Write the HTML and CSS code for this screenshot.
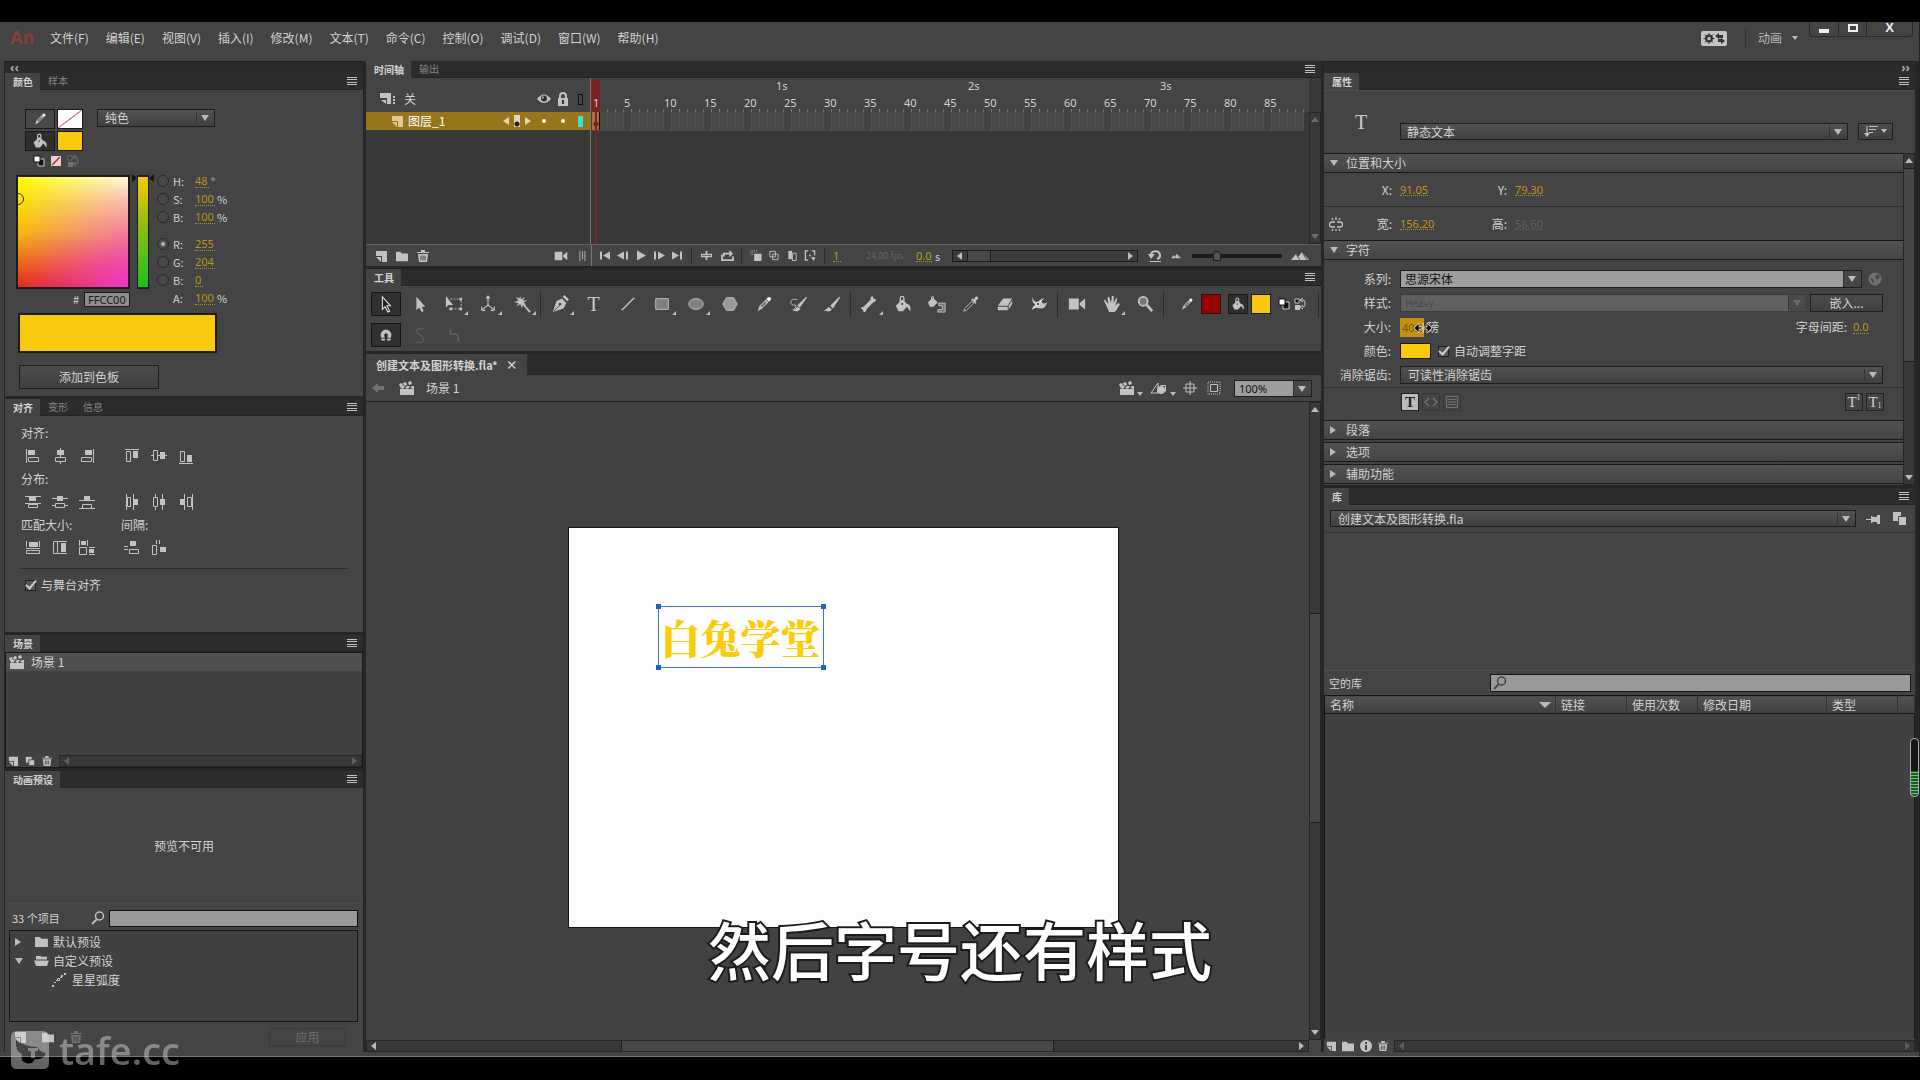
FILE: index.html
```html
<!DOCTYPE html>
<html lang="zh-CN">
<head>
<meta charset="utf-8">
<meta name="viewport" content="width=device-width, initial-scale=1">
<title>创建文本及图形转换.fla</title>
<link rel="stylesheet" href="styles.css">
</head>
<body>
<svg class="sprite" aria-hidden="true">
  <symbol id="menu" viewBox="0 0 12 10"><path d="M1 1h10v1H1zM1 3h10v1H1zM1 6h10v1H1zM1 8h10v1H1z"/></symbol>
  <symbol id="pencil" viewBox="0 0 20 20"><path d="M3 18l2-6 7-7 3 3-7 7z"/><path d="M12.500 4.500l2-2a2.200 2.200 0 0 1 3 3l-2 2z" fill="#f4f4f4"/><path d="M6 12l2 2 5-5-2-2z" fill="#777"/></symbol>
  <symbol id="bucket" viewBox="0 0 20 20"><path d="M2 12l7-7 7 6-6 7H5z"/><path d="M15 10c3 1 4 4 3 8-2-2-2-4-4-5z"/><path d="M7 10V3.500a2 2 0 0 1 4 0V9" fill="none" stroke="currentColor" stroke-width="1.500"/><circle cx="9" cy="10" r="1" fill="#333"/></symbol>
  <symbol id="swapbw" viewBox="0 0 12 12"><path d="M5 4h6v7H5z" fill="#111" stroke="#ccc"/><path d="M1 1h6v6H1z" fill="#fff" stroke="#111"/></symbol>
  <symbol id="nocolor" viewBox="0 0 12 12"><path d="M1 1h10v10H1z" fill="#eccfd2"/><path d="M2 10l8-8" stroke="#b02828" stroke-width="1.500"/></symbol>
  <symbol id="swap" viewBox="0 0 12 12"><path d="M1 1h4v4H1z" fill="#111" stroke="currentColor"/><path d="M1 7h5v5H1z"/><path d="M7 2h2q2 0 2 3v2q0 2-3 2M9 0L6 2l3 2M9 7L6 9l3 2" fill="none" stroke="currentColor"/></symbol>
  <symbol id="al" viewBox="0 0 16 16"><path d="M1 1h1v14H1zM3 2h7v5H3z"/><path d="M3.500 9.500h10v4h-10z" fill="none" stroke="currentColor"/></symbol>
  <symbol id="ac" viewBox="0 0 16 16"><path d="M8 0h1v16H8zM5 2h7v5H5z"/><path d="M3.500 9.500h10v4h-10z" fill="#434343" stroke="currentColor"/></symbol>
  <symbol id="ar" viewBox="0 0 16 16"><path d="M14 1h1v14h-1zM6 2h7v5H6z"/><path d="M2.500 9.500h10v4h-10z" fill="none" stroke="currentColor"/></symbol>
  <symbol id="at" viewBox="0 0 16 16"><path d="M1 1h14v1H1zM9 3h5v7H9z"/><path d="M2.500 3.500h4v10h-4z" fill="none" stroke="currentColor"/></symbol>
  <symbol id="am" viewBox="0 0 16 16"><path d="M0 7h16v1H0zM9 4h5v7H9z"/><path d="M2.500 2.500h4v10h-4z" fill="#434343" stroke="currentColor"/></symbol>
  <symbol id="ab" viewBox="0 0 16 16"><path d="M1 15h14v1H1zM9 7h5v7H9z"/><path d="M2.500 3.500h4v10h-4z" fill="none" stroke="currentColor"/></symbol>
  <symbol id="dt" viewBox="0 0 16 16"><path d="M0 2h16v1H0zM0 9h16v1H0zM4 3h7v4H4z"/><path d="M3.500 10.500h9v3h-9z" fill="none" stroke="currentColor"/></symbol>
  <symbol id="dm" viewBox="0 0 16 16"><path d="M0 4h16v1H0zM0 11h16v1H0zM5 2h6v5H5z"/><path d="M3.500 9.500h9v4h-9z" fill="#434343" stroke="currentColor"/></symbol>
  <symbol id="db" viewBox="0 0 16 16"><path d="M0 6h16v1H0zM0 14h16v1H0zM5 2h6v4H5z"/><path d="M3.500 10.500h9v4h-9z" fill="none" stroke="currentColor"/></symbol>
  <symbol id="dl" viewBox="0 0 16 16"><path d="M2 0h1v16H2zM9 0h1v16H9zM10 5h4v6h-4z"/><path d="M3.500 3.500h3v9h-3z" fill="none" stroke="currentColor"/></symbol>
  <symbol id="dc" viewBox="0 0 16 16"><path d="M4 0h1v16H4zM11 0h1v16h-1zM9 5h5v6H9z"/><path d="M2.500 3.500h4v9h-4z" fill="#434343" stroke="currentColor"/></symbol>
  <symbol id="dr" viewBox="0 0 16 16"><path d="M6 0h1v16H6zM14 0h1v16h-1zM2 5h4v6H2z"/><path d="M9.500 3.500h4v9h-4z" fill="none" stroke="currentColor"/></symbol>
  <symbol id="mw" viewBox="0 0 16 16"><path d="M1 1h1v6H1zM14 1h1v6h-1zM4 2h9v5H4zM1 8h14v1H1z"/><path d="M1.500 10.500h13v3h-13z" fill="none" stroke="currentColor"/></symbol>
  <symbol id="mh" viewBox="0 0 16 16"><path d="M6 1h9v1H6zM6 13h9v1H6zM9 3h5v9H9z"/><path d="M1.500 1.500h4v12h-4z" fill="none" stroke="currentColor"/></symbol>
  <symbol id="mb" viewBox="0 0 16 16"><path d="M0 0h1v6H0zM8 0h1v6H8zM2 1h5v4H2zM10 7h6v1h-6zM10 14h6v1h-6zM10 9h5v4h-5z"/><path d="M.5 7.500h7v7h-7z" fill="none" stroke="currentColor"/></symbol>
  <symbol id="sv" viewBox="0 0 16 16"><path d="M0 6h4v1H0zM0 9h4v1H0zM6 1h6v5H6z"/><path d="M5.500 9.500h9v4h-9z" fill="none" stroke="currentColor"/></symbol>
  <symbol id="sh" viewBox="0 0 16 16"><path d="M5 0h1v4H5zM8 0h1v4H8zM9 7h6v5H9z"/><path d="M1.500 5.500h4v9h-4z" fill="none" stroke="currentColor"/></symbol>
  <symbol id="clap" viewBox="0 0 16 14"><path d="M1 8h14v6H1zM0 3l3-1 1 3-3 1zM4 2l3-1 1 3-3 1zM9 1l3-1 1 3-3 1zM1 7l2-2h3L4 8zM6 7l2-2h3L9 8zM11 7l2-2h2v3z"/></symbol>
  <symbol id="layer" viewBox="0 0 12 12"><path d="M1 1h11v11H7V6H1z"/><path d="M1 7h5v5z"/></symbol>
  <symbol id="folder" viewBox="0 0 14 12"><path d="M0 1h5l2 2h7v9H0z"/></symbol>
  <symbol id="open" viewBox="0 0 16 12"><path d="M2 1h5l1 1h6v3H2zM0 6h16l-2 6H2z"/></symbol>
  <symbol id="trash" viewBox="0 0 12 12"><path d="M4 0h4v2h4v1H0V2h4zM1 4h10l-1 8H2z"/><path d="M4 5.500v5M6 5.500v5M8 5.500v5" stroke="#444"/></symbol>
  <symbol id="dup" viewBox="0 0 12 12"><path d="M1 1h7v7H1z"/><path d="M4.500 4.500h7v7h-7z" stroke="#444"/></symbol>
  <symbol id="info" viewBox="0 0 12 12"><circle cx="6" cy="6" r="6"/><path d="M5 5h2v5H5zM5 2h2v2H5z" fill="#444"/></symbol>
  <symbol id="find" viewBox="0 0 14 14"><circle cx="8.500" cy="5" r="4" fill="none" stroke="currentColor" stroke-width="1.500"/><path d="M6 8l-5 5" stroke="currentColor" stroke-width="1.800"/></symbol>
  <symbol id="motion" viewBox="0 0 14 14"><path d="M0 12h2v2H0zM2 9h2v1H2zM4 7h1v1H4zM8 4h2v1H8zM9 2h2v2H9zM12 0h2v2h-2z"/><path d="M5.500 5.500h2v2h-2z" fill="none" stroke="currentColor"/></symbol>
  <symbol id="eye" viewBox="0 0 14 10"><path d="M0 5q7-9 14 0-7 8-14 0z"/><circle cx="7" cy="4.500" r="3" fill="#333"/><circle cx="6" cy="3.500" r="1"/></symbol>
  <symbol id="lock" viewBox="0 0 12 14"><path d="M1 6h10v8H1z"/><path d="M3 7V4a3 3 0 0 1 6 0v3" fill="none" stroke="currentColor" stroke-width="2"/><path d="M5 8h2v4H5z" fill="#333"/></symbol>
  <symbol id="layers" viewBox="0 0 16 12"><path d="M0 0h11v11H7V5H0z"/><path d="M1 7h5v4zM13 3h2v2h-2zM13 6h2v2h-2zM13 9h2v2h-2z"/></symbol>
  <symbol id="cam" viewBox="0 0 20 14"><path d="M1 1h11v12H1zM13 6l6-5v12l-6-5z"/></symbol>
  <symbol id="grip" viewBox="0 0 8 12"><path d="M1 0h1v12H1zM4 0h1v10H4zM7 0h1v12H7z"/></symbol>
  <symbol id="first" viewBox="0 0 12 10"><path d="M1 1h2v8H1zM11 1v8L4 5z"/></symbol>
  <symbol id="prev" viewBox="0 0 12 10"><path d="M0 5l7-4v8zM9 1h2v8H9z"/></symbol>
  <symbol id="play" viewBox="0 0 12 10"><path d="M2 0l9 5-9 5z"/></symbol>
  <symbol id="next" viewBox="0 0 12 10"><path d="M12 5L5 1v8zM1 1h2v8H1z"/></symbol>
  <symbol id="last" viewBox="0 0 12 10"><path d="M9 1h2v8H9zM1 1v8l7-4z"/></symbol>
  <symbol id="center" viewBox="0 0 12 12"><path d="M5 1h2v10H5zM0 4h12v4H0z"/><path d="M1 6h10" stroke="#666"/></symbol>
  <symbol id="loop" viewBox="0 0 14 12"><path d="M0 5h2v5h10V7h2v5H0z"/><path d="M2 3h7V0l4 4-4 4V5H4v2H2z"/></symbol>
  <symbol id="on1" viewBox="0 0 12 12"><path d="M4 4h8v8H4z"/><path d="M0 1h7M0 3h4M0 5h3" stroke="currentColor" stroke-dasharray="1"/></symbol>
  <symbol id="on2" viewBox="0 0 12 12"><path d="M1.500 1.500h6v6h-6zM4.500 4.500h6v6h-6z" fill="none" stroke="currentColor"/></symbol>
  <symbol id="on3" viewBox="0 0 12 12"><path d="M2 1h4v9H2z"/><path d="M6.500 3.500h4v8h-4z" fill="none" stroke="currentColor"/></symbol>
  <symbol id="on4" viewBox="0 0 12 12"><path d="M4 1H1v10h3M8 1h3v5" fill="none" stroke="currentColor" stroke-width="1.500"/><circle cx="6" cy="6" r="1"/><path d="M7 8h5l-2 4z"/></symbol>
  <symbol id="undo" viewBox="0 0 14 14"><path d="M3 6a4.500 4 0 1 1 6 4" fill="none" stroke="currentColor" stroke-width="2"/><path d="M0 5h7l-4 5zM2 12h11v1H2z"/></symbol>
  <symbol id="mtn" viewBox="0 0 18 10"><path d="M0 9l5-6 2 3 4-5 7 8z"/><path d="M5 3l4 6M11 1l5 8" stroke="#555"/></symbol>
  <symbol id="arrow" viewBox="0 0 20 20"><path d="M6 2v14l3-3 3 6 2-1-3-6h4z" fill="#222" stroke="#ddd" stroke-width="1.200"/></symbol>
  <symbol id="sub" viewBox="0 0 20 20"><path d="M6 2v15l3-3 3 5 2-1-2-5h4z"/></symbol>
  <symbol id="free" viewBox="0 0 20 20"><path d="M1 1v13l3-3 5 0z"/><path d="M6 4.500h12v11H5" fill="none" stroke="currentColor" stroke-dasharray="2 1.500"/><path d="M16 3h3v3h-3zM16 14h3v3h-3zM5 14h3v3H5z"/></symbol>
  <symbol id="rot3d" viewBox="0 0 20 20"><path d="M10 2v9l-6 5M10 11l6 5M10 1L8 4M10 1l2 3M3 17v-4M3 17h4M17 17v-4M17 17h-4" fill="none" stroke="currentColor" stroke-width="1.300"/></symbol>
  <symbol id="wand" viewBox="0 0 20 20"><path d="M8 1l1 4 4-3-2 4 5 0-4 2 3 4-4-2-1 5-2-5-4 3 2-4-5-1 5-2-3-4 4 2z"/><path d="M11 10l8 9" stroke="currentColor" stroke-width="2"/></symbol>
  <symbol id="pen" viewBox="0 0 20 20"><path d="M2 19l4-12 6-3 5 5-3 6z"/><path d="M13 2l5 5 2-2-5-5z"/><path d="M3 18l7-7" stroke="#444"/><circle cx="10" cy="10" r="1.500" fill="#444"/></symbol>
  <symbol id="line" viewBox="0 0 20 20"><path d="M3 17L17 3" stroke="currentColor" stroke-width="1.500"/></symbol>
  <symbol id="rect" viewBox="0 0 20 20"><path d="M3 4h14v12H3z" fill="#808080" stroke="currentColor"/></symbol>
  <symbol id="oval" viewBox="0 0 20 20"><ellipse cx="10" cy="10" rx="8" ry="6" fill="#808080" stroke="currentColor"/></symbol>
  <symbol id="hex" viewBox="0 0 20 20"><path d="M6 3h8l4 7-4 7H6l-4-7z" fill="#999" stroke="currentColor"/></symbol>
  <symbol id="brush2" viewBox="0 0 20 20"><path d="M4 17q4-1 5-4l4 2q-3 5-9 2zM9 12l10-10 1 1-8 11z"/><path d="M9 5Q2 4 2 8t5 3q2 3-3 6" fill="none" stroke="currentColor"/></symbol>
  <symbol id="brush" viewBox="0 0 20 20"><path d="M1 17q4-1 5-4l4 3q-3 4-9 1zM8 12l10-10 1 1-8 12z"/></symbol>
  <symbol id="bone" viewBox="0 0 20 20"><path d="M4 13l8-8q-1-3 2-4l1 3 3 1q-1 3-3 3l-8 8q0 3-3 3l-1-3-2-1q0-2 3-2z"/></symbol>
  <symbol id="ink" viewBox="0 0 20 20"><path d="M0 8l5-5 6 5-5 5H2z"/><path d="M4 6V2h2v4" fill="none" stroke="currentColor"/><path d="M12 9h7v10h-8v-3h5v-4h-4z" fill="#777" stroke="currentColor"/></symbol>
  <symbol id="drop" viewBox="0 0 20 20"><path d="M2 18l1-3 8-8 2 2-8 8z" fill="none" stroke="currentColor"/><path d="M10 5l5 5 1-2-1-1 3-3q0-3-3-2l-2 3-1-1z"/></symbol>
  <symbol id="eraser" viewBox="0 0 20 20"><path d="M2 12l6-8h10l-5 8z"/><path d="M2 13h11v4H2zM14 12l4-6v4l-4 6z"/></symbol>
  <symbol id="warp" viewBox="0 0 20 20"><path d="M3 2q0 5 5 6l5-4q-1 8 6 4-2 8-8 7-5-2-9 1 1-4 4-5-5-3-3-9z"/><path d="M3 16L15 4" stroke="#fff"/><circle cx="9" cy="10" r="2" fill="#444" stroke="#fff"/></symbol>
  <symbol id="hand" viewBox="0 0 20 20"><path d="M4 10L2 6l1-1 4 5L6 3l2-1 2 7 1-8h2v8l3-6 1 1-2 8 3-3 2 1-4 7-2 2H8z"/></symbol>
  <symbol id="zoomer" viewBox="0 0 20 20"><circle cx="8" cy="7" r="5" fill="#777" stroke="currentColor" stroke-width="2"/><path d="M12 11l6 7" stroke="currentColor" stroke-width="3"/></symbol>
  <symbol id="magnet" viewBox="0 0 20 20"><path d="M5 16l-1-6a6 6 0 0 1 12 0l-1 6h-4l1-6a2 2 0 0 0-4 0l1 6z"/><path d="M4 13.500h5M11 13.500h5" stroke="#333"/></symbol>
  <symbol id="smooth" viewBox="0 0 20 20"><path d="M14 3H8q-4 3 0 6l4 2q4 4 0 7H6" fill="none" stroke="currentColor"/></symbol>
  <symbol id="straight" viewBox="0 0 20 20"><path d="M6 3v6h6q3 0 3 9" fill="none" stroke="currentColor" stroke-width="1.500"/></symbol>
  <symbol id="back" viewBox="0 0 12 12"><path d="M0 6l6-5v3h6v4H6v3z"/></symbol>
  <symbol id="symbols" viewBox="0 0 18 14"><path d="M8 2v10H1z" fill="none" stroke="currentColor"/><circle cx="11" cy="9" r="4"/><path d="M10.500 4.500h5v6" fill="none" stroke="currentColor"/></symbol>
  <symbol id="cross" viewBox="0 0 14 14"><path d="M7 0v14M0 7h14M3 3h8v8H3z" fill="none" stroke="currentColor"/></symbol>
  <symbol id="clip" viewBox="0 0 14 14"><path d="M1 1h12v12H1z" fill="none" stroke="currentColor" stroke-dasharray="1"/><path d="M3.500 3.500h7v7h-7z" fill="none" stroke="currentColor"/></symbol>
  <symbol id="gear" viewBox="0 0 26 15"><rect width="26" height="15" rx="2" fill="#c4c4c4"/><circle cx="8" cy="7.500" r="3" fill="none" stroke="#333" stroke-width="2"/><path d="M8 2v11M2.500 7.500h11M4 3.500l8 8M4 11.500l8-8" stroke="#333"/><circle cx="8" cy="7.500" r="1.500" fill="#c4c4c4"/><path d="M14 5l4-3v2h4v3h-4v1zM24 10l-4 3v-2h-3V8h3V7z" fill="#333"/></symbol>
  <symbol id="link" viewBox="0 0 14 14"><path d="M6 5H3a2 2 0 0 0 0 5h3M8 5h3a2 2 0 0 1 0 5H8M7 0v3M3 1l1 2M11 1l-1 2M7 12v2M3 14l1-2M11 14l-1-2" fill="none" stroke="currentColor" stroke-width="1.300"/></symbol>
  <symbol id="sort" viewBox="0 0 14 12"><path d="M3 1v8M5 1.500h9M5 4.500h7M5 7.500h4" fill="none" stroke="currentColor" stroke-width="1.200"/><path d="M0 8h6l-3 4z"/></symbol>
  <symbol id="globe" viewBox="0 0 14 14"><circle cx="7" cy="7" r="6.500"/><path d="M8 2l4 2-2 4-3-2zM2 5l4 3-1 4z" fill="#555"/></symbol>
  <symbol id="code" viewBox="0 0 14 14"><path d="M5 3L1 7l4 4M9 3l4 4-4 4" fill="none" stroke="currentColor" stroke-width="1.500"/></symbol>
  <symbol id="para" viewBox="0 0 14 14"><path d="M1.500 1.500h11v11h-11zM3 4.500h8M3 7h8M3 9.500h8" fill="none" stroke="currentColor"/></symbol>
  <symbol id="pin" viewBox="0 0 14 14"><path d="M0 7h5V4h1l1 1h4V3h3v9h-3v-2H7l-1 1H5V8H0z"/></symbol>
  <symbol id="newlib" viewBox="0 0 14 14"><path d="M0 0h8v9H0z"/><path d="M5.500 4.500h8v9h-8z" stroke="#444"/></symbol>
  <symbol id="resize" viewBox="0 0 18 10"><path d="M0 5l5-5v4h3v2H5v4zM18 5l-5-5v4h-3v2h3v4z" fill="#111" stroke="#ddd" stroke-width=".8"/><path d="M9 0v10" stroke="#eee"/></symbol>
  <symbol id="mark" viewBox="0 0 38 38"><path fill-rule="evenodd" d="M6 0h26q6 0 6 6v26q0 6-6 6H6q-6 0-6-6V6q0-6 6-6zM5 9q-1 12 6 14-2 7 4 9 6 2 9-4 9 1 11-6-6-1-9-6Q14 16 5 9z"/><path d="M17 17h10v3h-3v7h-4v-7h-3z"/></symbol>
</svg>

<div class="app">
<div class="window">
  <header class="menubar">
    <span class="logo">An</span>
    <nav class="menus">
      <a href="#">文件(F)</a><a href="#">编辑(E)</a><a href="#">视图(V)</a><a href="#">插入(I)</a><a href="#">修改(M)</a><a href="#">文本(T)</a><a href="#">命令(C)</a><a href="#">控制(O)</a><a href="#">调试(D)</a><a href="#">窗口(W)</a><a href="#">帮助(H)</a>
    </nav>
    <button class="sync" aria-label="同步设置"><svg class="i26"><use href="#gear"/></svg></button>
    <button class="space">动画<span class="tri small"></span></button>
    <div class="winbtns"><button aria-label="最小化"><span class="min"></span></button><button aria-label="最大化"><span class="max"></span></button><button class="x" aria-label="关闭">X</button></div>
  </header>

  <main class="workspace">
    <div class="col left">
      <div class="strip"><button aria-label="折叠">‹‹</button></div>
      <section class="panel">
        <div class="tabs"><button class="tab on">颜色</button><button class="tab">样本</button><button class="pm" aria-label="面板菜单"><svg><use href="#menu"/></svg></button></div>
        <div class="color">
          <div class="paint">
            <div class="chips">
              <button class="chip" aria-label="笔触"><svg class="i14"><use href="#pencil"/></svg></button><button class="chip none" aria-label="笔触颜色"></button>
              <button class="chip dark" aria-label="填充"><svg class="i16"><use href="#bucket"/></svg></button><button class="chip gold" aria-label="填充颜色"></button>
            </div>
            <div class="select"><select aria-label="颜色类型"><option>纯色</option></select></div>
          </div>
          <div class="minis"><svg class="i12"><use href="#swapbw"/></svg><svg class="i12"><use href="#nocolor"/></svg><svg class="i12 dim"><use href="#swap"/></svg></div>
          <div class="picker">
            <div class="pick">
              <div class="fields"><div class="sq"><span class="ring"></span></div><div class="hue"></div></div>
              <label class="hexrow"># <input class="hex" value="FFCC00"></label>
            </div>
            <div class="chan">
              <div><label><input type="radio" name="ch">H:</label><input class="hot w14" aria-label="H" value="48"><span>°</span></div>
              <div><label><input type="radio" name="ch">S:</label><input class="hot w20" aria-label="S" value="100"><span>%</span></div>
              <div><label><input type="radio" name="ch">B:</label><input class="hot w20" aria-label="亮度" value="100"><span>%</span></div>
              <div class="gap"><label><input type="radio" name="ch" checked>R:</label><input class="hot w20" aria-label="R" value="255"></div>
              <div><label><input type="radio" name="ch">G:</label><input class="hot w20" aria-label="G" value="204"></div>
              <div><label><input type="radio" name="ch">B:</label><input class="hot w8" aria-label="B" value="0"></div>
              <div><label class="alpha">A:</label><input class="hot w20" aria-label="A" value="100"><span>%</span></div>
            </div>
          </div>
          <div class="preview"></div>
          <button class="btn add">添加到色板</button>
        </div>
      </section>

      <section class="panel">
        <div class="tabs"><button class="tab on">对齐</button><button class="tab">变形</button><button class="tab">信息</button><button class="pm" aria-label="面板菜单"><svg><use href="#menu"/></svg></button></div>
        <div class="align">
          <h3>对齐:</h3>
          <div class="arow"><svg><use href="#al"/></svg><svg><use href="#ac"/></svg><svg><use href="#ar"/></svg><i></i><svg><use href="#at"/></svg><svg><use href="#am"/></svg><svg><use href="#ab"/></svg></div>
          <h3>分布:</h3>
          <div class="arow"><svg><use href="#dt"/></svg><svg><use href="#dm"/></svg><svg><use href="#db"/></svg><i></i><svg><use href="#dl"/></svg><svg><use href="#dc"/></svg><svg><use href="#dr"/></svg></div>
          <div class="two"><h3>匹配大小:</h3><h3>间隔:</h3></div>
          <div class="arow"><svg><use href="#mw"/></svg><svg><use href="#mh"/></svg><svg><use href="#mb"/></svg><i></i><svg><use href="#sv"/></svg><svg><use href="#sh"/></svg></div>
          <label class="check"><input type="checkbox" checked>与舞台对齐</label>
        </div>
      </section>

      <section class="panel">
        <div class="tabs"><button class="tab on">场景</button><button class="pm" aria-label="面板菜单"><svg><use href="#menu"/></svg></button></div>
        <div class="scenes">
          <div class="scene"><svg class="clap"><use href="#clap"/></svg>场景 1</div>
          <div class="foot"><svg class="i10"><use href="#layer"/></svg><svg class="i10"><use href="#dup"/></svg><svg class="i10"><use href="#trash"/></svg><div class="hbar off"></div></div>
        </div>
      </section>

      <section class="panel grow">
        <div class="tabs"><button class="tab on">动画预设</button><button class="pm" aria-label="面板菜单"><svg><use href="#menu"/></svg></button></div>
        <div class="presets">
          <div class="pview">预览不可用</div>
          <div class="search"><span>33 个项目</span><svg class="i14"><use href="#find"/></svg><input aria-label="搜索预设"></div>
          <ul class="tree">
            <li><span class="tri rt"></span><svg class="f"><use href="#folder"/></svg>默认预设</li>
            <li><span class="tri"></span><svg class="f"><use href="#open"/></svg>自定义预设</li>
            <li class="in"><svg class="i14"><use href="#motion"/></svg>星星弧度</li>
          </ul>
          <div class="apply"><svg class="i12"><use href="#layer"/></svg><svg class="i12"><use href="#folder"/></svg><svg class="i12 dim"><use href="#trash"/></svg><button class="btn" disabled>应用</button></div>
        </div>
      </section>
    </div>

    <div class="col mid">
      <section class="panel">
        <div class="tabs"><button class="tab on">时间轴</button><button class="tab">输出</button><button class="pm" aria-label="面板菜单"><svg><use href="#menu"/></svg></button></div>
        <div class="timeline">
          <div class="layers">
            <div class="lhead"><svg class="ly"><use href="#layers"/></svg><span>关</span><svg class="i14 r"><use href="#eye"/></svg><svg class="i14"><use href="#lock"/></svg><b class="outline"></b></div>
            <div class="lrow"><svg class="i12"><use href="#layer"/></svg><span>图层_1</span><span class="tri lt r"></span><b class="key"></b><span class="tri rt"></span><b class="dot"></b><b class="dot"></b><b class="outline cyan"></b></div>
          </div>
          <div class="frames">
            <div class="ruler">
              <div class="secs"><span>1s</span><span>2s</span><span>3s</span></div>
              <div class="nums"><span>1</span><span>5</span><span>10</span><span>15</span><span>20</span><span>25</span><span>30</span><span>35</span><span>40</span><span>45</span><span>50</span><span>55</span><span>60</span><span>65</span><span>70</span><span>75</span><span>80</span><span>85</span></div>
            </div>
            <div class="cells"><b class="frame"></b></div>
            <div class="playhead"></div>
          </div>
          <div class="vbar dimmed"></div>
        </div>
        <div class="tfoot">
          <div class="tl"><svg class="i12"><use href="#layer"/></svg><svg class="i12"><use href="#folder"/></svg><svg class="i12"><use href="#trash"/></svg><svg class="i14 r"><use href="#cam"/></svg><svg class="i10"><use href="#grip"/></svg></div>
          <div class="tr">
            <div class="grp"><button aria-label="首帧"><svg><use href="#first"/></svg></button><button aria-label="后退"><svg><use href="#prev"/></svg></button><button aria-label="播放"><svg><use href="#play"/></svg></button><button aria-label="前进"><svg><use href="#next"/></svg></button><button aria-label="末帧"><svg><use href="#last"/></svg></button></div>
            <div class="grp wide"><button aria-label="居中"><svg><use href="#center"/></svg></button><button aria-label="循环"><svg><use href="#loop"/></svg></button></div>
            <div class="grp"><button aria-label="绘图纸"><svg><use href="#on1"/></svg></button><button aria-label="轮廓"><svg><use href="#on2"/></svg></button><button aria-label="多帧"><svg><use href="#on3"/></svg></button><button aria-label="标记"><svg><use href="#on4"/></svg></button></div>
            <input class="hot w8 cur" aria-label="当前帧" value="1"><span class="fps">24.00 fps</span><input class="hot w16 lime" aria-label="时间" value="0.0"><span>s</span>
            <div class="hbar tscroll"><b></b></div>
            <svg class="i14 undo"><use href="#undo"/></svg><svg class="i10"><use href="#mtn"/></svg>
            <input type="range" aria-label="帧宽" value="26"><svg class="i18"><use href="#mtn"/></svg>
          </div>
        </div>
      </section>

      <section class="panel">
        <div class="tabs"><button class="tab on">工具</button><button class="pm" aria-label="面板菜单"><svg><use href="#menu"/></svg></button></div>
        <div class="tools">
          <div class="trow">
            <button class="tool sel" aria-label="选择"><svg><use href="#arrow"/></svg></button><button class="tool" aria-label="部分选取"><svg><use href="#sub"/></svg></button><button class="tool more" aria-label="任意变形"><svg><use href="#free"/></svg></button><button class="tool more" aria-label="3D旋转"><svg><use href="#rot3d"/></svg></button><button class="tool more" aria-label="魔术棒"><svg><use href="#wand"/></svg></button><i></i>
            <button class="tool more" aria-label="钢笔"><svg><use href="#pen"/></svg></button><button class="tool serif" aria-label="文本">T</button><button class="tool" aria-label="线条"><svg><use href="#line"/></svg></button><button class="tool more" aria-label="矩形"><svg><use href="#rect"/></svg></button><button class="tool more" aria-label="椭圆"><svg><use href="#oval"/></svg></button><button class="tool" aria-label="多角星形"><svg><use href="#hex"/></svg></button><button class="tool" aria-label="铅笔"><svg><use href="#pencil"/></svg></button><button class="tool" aria-label="画笔"><svg><use href="#brush2"/></svg></button><button class="tool" aria-label="刷子"><svg><use href="#brush"/></svg></button><i></i>
            <button class="tool more" aria-label="骨骼"><svg><use href="#bone"/></svg></button><button class="tool" aria-label="颜料桶"><svg><use href="#bucket"/></svg></button><button class="tool" aria-label="墨水瓶"><svg><use href="#ink"/></svg></button><button class="tool" aria-label="滴管"><svg><use href="#drop"/></svg></button><button class="tool" aria-label="橡皮擦"><svg><use href="#eraser"/></svg></button><button class="tool" aria-label="宽度"><svg><use href="#warp"/></svg></button><i></i>
            <button class="tool" aria-label="摄像头"><svg><use href="#cam"/></svg></button><button class="tool more" aria-label="手形"><svg><use href="#hand"/></svg></button><button class="tool" aria-label="缩放"><svg><use href="#zoomer"/></svg></button><i></i>
            <div class="paints"><svg class="i14"><use href="#pencil"/></svg><button class="chip red" aria-label="笔触颜色"></button><button class="chip dark" aria-label="填充"><svg class="i14"><use href="#bucket"/></svg></button><button class="chip gold" aria-label="填充颜色"></button><svg class="i12"><use href="#swapbw"/></svg><svg class="i12"><use href="#swap"/></svg></div><i></i>
          </div>
          <div class="trow"><button class="tool sel" aria-label="贴紧"><svg><use href="#magnet"/></svg></button><button class="tool dim" aria-label="平滑"><svg><use href="#smooth"/></svg></button><button class="tool dim" aria-label="伸直"><svg><use href="#straight"/></svg></button></div>
        </div>
      </section>

      <section class="panel grow">
        <div class="tabs doc"><button class="tab on">创建文本及图形转换.fla*<span class="close">×</span></button></div>
        <div class="docbar">
          <svg class="i12 dim"><use href="#back"/></svg><svg class="clap"><use href="#clap"/></svg><span>场景 1</span>
          <div class="docr"><svg class="clap"><use href="#clap"/></svg><span class="tri small"></span><svg class="i18"><use href="#symbols"/></svg><span class="tri small"></span><svg class="i14"><use href="#cross"/></svg><svg class="i14"><use href="#clip"/></svg><div class="select light"><select aria-label="缩放比例"><option>100%</option></select></div></div>
        </div>
        <div class="stage">
          <div class="view"><div class="canvas"><div class="textbox"><span>白兔学堂</span><b></b><b></b><b></b><b></b></div></div></div>
          <div class="vbar"><b></b></div>
          <div class="hbar"><b></b></div>
          <div class="corner"></div>
        </div>
      </section>
    </div>

    <div class="col right">
      <div class="strip end"><button aria-label="折叠">››</button></div>
      <section class="panel">
        <div class="tabs"><button class="tab on">属性</button><button class="pm" aria-label="面板菜单"><svg><use href="#menu"/></svg></button></div>
        <div class="ptype"><span class="bigt">T</span><div class="select"><select aria-label="文本类型"><option>静态文本</option></select></div><button class="btn sort" aria-label="方向"><svg class="i14"><use href="#sort"/></svg><span class="tri small"></span></button></div>
        <div class="props">
          <div class="plist">
            <h2><span class="tri"></span>位置和大小</h2>
            <div class="xy"><label for="px">X:</label><input id="px" class="hot w26" value="91.05"><label for="py">Y:</label><input id="py" class="hot w26" value="79.30"></div>
            <div class="xy wh"><svg class="i14"><use href="#link"/></svg><label for="pw">宽:</label><input id="pw" class="hot w32" value="156.20"><label for="ph">高:</label><input id="ph" class="hot w26" value="58.60" disabled></div>
            <h2><span class="tri"></span>字符</h2>
            <div class="chars">
              <div class="prow"><label for="fam">系列:</label><div class="select light"><select id="fam"><option>思源宋体</option></select></div><svg class="i14 globe dim"><use href="#globe"/></svg></div>
              <div class="prow"><label for="sty">样式:</label><div class="select off"><select id="sty" disabled><option>Heavy</option></select></div><button class="btn embed">嵌入...</button></div>
              <div class="prow"><label for="siz">大小:</label><div class="size"><input id="siz" value="40.0">磅<svg class="cursor"><use href="#resize"/></svg></div><label class="kern" for="krn">字母间距:</label><input id="krn" class="hot w16" value="0.0"></div>
              <div class="prow"><label for="tc">颜色:</label><button id="tc" class="chip gold wide" aria-label="文本颜色"></button><label class="check"><input type="checkbox" checked>自动调整字距</label></div>
              <div class="prow"><label for="aa">消除锯齿:</label><div class="select"><select id="aa"><option>可读性消除锯齿</option></select></div></div>
            </div>
            <div class="tbtns"><button class="tb sel" aria-label="可选">T</button><button class="tb dim" aria-label="HTML"><svg class="i14"><use href="#code"/></svg></button><button class="tb dim" aria-label="边框"><svg class="i14"><use href="#para"/></svg></button><button class="tb r">T<sup>1</sup></button><button class="tb">T<sub>1</sub></button></div>
            <h2><span class="tri rt"></span>段落</h2>
            <h2><span class="tri rt"></span>选项</h2>
            <h2><span class="tri rt"></span>辅助功能</h2>
          </div>
          <div class="vbar"><b></b></div>
        </div>
      </section>

      <section class="panel grow">
        <div class="tabs"><button class="tab on">库</button><button class="pm" aria-label="面板菜单"><svg><use href="#menu"/></svg></button></div>
        <div class="library">
          <div class="lsel"><div class="select"><select aria-label="文档"><option>创建文本及图形转换.fla</option></select></div><svg class="i14"><use href="#pin"/></svg><svg class="i14"><use href="#newlib"/></svg></div>
          <div class="lview"></div>
          <div class="lfind"><span>空的库</span><div><svg class="i14"><use href="#find"/></svg><input aria-label="搜索库"></div></div>
          <table class="ltable"><thead><tr><th class="name">名称<span class="tri big"></span></th><th class="c71">链接</th><th class="c71">使用次数</th><th class="c129">修改日期</th><th class="c71">类型</th><th class="c17"></th></tr></thead></table>
          <div class="lempty"></div>
          <div class="foot lib"><svg class="i10"><use href="#layer"/></svg><svg class="i12"><use href="#folder"/></svg><svg class="i12"><use href="#info"/></svg><svg class="i10"><use href="#trash"/></svg><div class="hbar off"></div></div>
        </div>
      </section>
    </div>
  </main>
</div>
<div class="meter"></div>
<p class="subtitle">然后字号还有样式</p>
<div class="watermark"><svg><use href="#mark"/></svg><span>tafe.cc</span></div>
</div>
</body>
</html>
```
FILE: styles.css
```css
* { box-sizing: border-box; }
body { margin: 0; background: #000; color: #d2d2d2; font: 12px/16px "Noto Sans CJK SC", "Noto Sans", sans-serif; }
button, input, select { font: inherit; color: inherit; margin: 0; padding: 0; border: 0; background: none; border-radius: 0; }
button { display: flex; align-items: center; justify-content: center; }
h2, h3, p, ul { margin: 0; padding: 0; font-weight: 400; font-size: 12px; list-style: none; }
a { color: inherit; text-decoration: none; }
svg { display: block; flex: none; fill: #c2c2c2; color: #c2c2c2; }
.sprite { position: absolute; width: 0; height: 0; }
.i10 { width: 10px; height: 10px; }
.i12 { width: 12px; height: 12px; }
.i14 { width: 14px; height: 14px; }
.i16 { width: 16px; height: 16px; }
.i18 { width: 18px; height: 14px; }
.i26 { width: 26px; height: 15px; }
.clap { width: 16px; height: 14px; }
.dim { opacity: .35; }
.r { margin-left: auto; }

.app { position: relative; display: flex; flex-direction: column; min-height: 100vh; padding: 22px 0 23px; }
.window { flex: 1; display: flex; flex-direction: column; background: #444; border-bottom: 1px solid #777; border-right: 1px solid #222; }
.menubar { display: flex; align-items: center; height: 39px; padding: 0 0 7px 10px; }
.logo { width: 40px; color: #8b3f38; font: bold 18px/20px "Liberation Sans", sans-serif; }
.menus { flex: 1; display: flex; gap: 17px; }
.space { height: 20px; margin-right: 11px; padding-left: 12px; gap: 10px; border-left: 1px solid #333; color: #bbb; }
.sync { margin-right: 18px; }
.winbtns { align-self: flex-start; display: flex; margin-right: 6px; border: 1px solid #2a2a2a; border-top: 0; border-radius: 0 0 4px 4px; }
.winbtns button { width: 28px; height: 14px; padding-bottom: 3px; }
.winbtns button + button { border-left: 1px solid #2a2a2a; }
.winbtns .x { width: 46px; color: #eee; font: bold 13px/13px "Liberation Sans", sans-serif; }
.min { width: 10px; height: 4px; margin-top: 6px; background: #eee; }
.max { width: 10px; height: 8px; border: 2px solid #eee; }

.tri { flex: none; width: 0; height: 0; border: 4px solid transparent; border-top: 6px solid #bbb; border-bottom: 0; }
.tri.rt { border: 4px solid transparent; border-left: 6px solid #bbb; border-right: 0; }
.tri.lt { border: 4px solid transparent; border-right: 6px solid #bbb; border-left: 0; }
.tri.small { border-width: 4px 3px 0; }
.tri.big { border-width: 6px 6px 0; }

.workspace { flex: 1; display: grid; grid-template-columns: 358px minmax(0, 1fr) 591px; gap: 3px; padding: 0 4px 0 5px; margin-bottom: 4px; background: #262626; box-shadow: inset 4px 0 #404040; }
.col { display: flex; flex-direction: column; gap: 3px; min-width: 0; }
.strip { height: 12px; margin-bottom: -3px; padding: 0 5px; display: flex; align-items: center; background: #2a2a2a; border-top: 1px solid #1e1e1e; }
.strip button { font: bold 12px/10px "Noto Sans", sans-serif; color: #aaa; }
.strip.end { justify-content: flex-end; }
.panel { background: #444; }
.grow { flex: 1; display: flex; flex-direction: column; }
.tabs { display: flex; height: 17px; background: #2c2c2c; border-bottom: 1px solid #242424; }
.tab { padding: 0 7px 0 8px; font-size: 10px; line-height: 14px; color: #848484; }
.tab.on { height: 17px; background: #444; color: #d2d2d2; font-weight: 700; }
.pm { margin-left: auto; padding-right: 5px; }
.pm svg { width: 12px; height: 10px; }

.select { position: relative; height: 18px; border: 1px solid #1e1e1e; background: linear-gradient(#525252, #404040); }
.select select { display: block; width: 100%; height: 100%; padding: 0 20px 0 7px; appearance: none; outline: 0; font-size: 12px; line-height: 16px; opacity: 1; }
.select::before { content: ""; position: absolute; top: 2px; bottom: 2px; right: 17px; border-left: 1px solid #333; }
.select::after { content: ""; position: absolute; top: 5px; right: 5px; border: 4px solid transparent; border-top: 6px solid #bbb; border-bottom: 0; pointer-events: none; }
.select.light { background: linear-gradient(90deg, #9e9e9e calc(100% - 18px), #1e1e1e 0, #1e1e1e calc(100% - 17px), #474747 0); color: #111; }
.select.light select { padding-left: 4px; }
.select.off { background: linear-gradient(90deg, #606060 calc(100% - 18px), #4a4a4a 0); border-color: #3c3c3c; color: #4c4c4c; }
.select.off select { padding-left: 4px; font-size: 10px; }
.select.off::after { opacity: .3; }
.btn { height: 18px; border: 1px solid #1e1e1e; background: linear-gradient(#4c4c4c, #404040); }
.btn:disabled { background: none; border-color: #3a3a3a; color: #6c6c6c; }
.hot { height: 13px; border-bottom: 1px dotted #b58c1e; color: #bf9220; font: 11px/12px "Noto Sans", sans-serif; outline: 0; }
.hot:disabled { color: #5e5e5e; border-color: #666; }
.w8 { width: 8px; } .w14 { width: 14px; } .w16 { width: 16px; } .w20 { width: 20px; } .w26 { width: 28px; } .w32 { width: 34px; }
.chip { width: 20px; height: 20px; border: 1px solid #1a1a1a; background: #484848; }
.chip.dark { background: #2e2e2e; }
.chip.gold { background: #f8c90c; }
.chip.red { background: #900; }
.chip.none { background: linear-gradient(to bottom right, #fff calc(50% - 1px), #c0606c 50%, #fff calc(50% + 1px)); }
.check { display: flex; align-items: center; gap: 5px; }
input[type="checkbox"] { appearance: none; width: 11px; height: 11px; border: 1px solid #222; background: #555; display: grid; place-items: center; }
input[type="checkbox"]:checked::after { content: ""; width: 4px; height: 9px; margin-top: -4px; border: solid #ccc; border-width: 0 2px 2px 0; transform: rotate(40deg); }

/* colour panel */
.color { padding: 19px 0 7px 11px; }
.paint { display: flex; gap: 14px; padding-left: 9px; }
.chips { display: grid; grid-template-columns: 30px 26px; gap: 2px; }
.chips .chip { width: 100%; }
.paint .select { width: 118px; }
.minis { display: flex; gap: 5px; padding: 4px 0 0 17px; height: 21px; }
.picker { display: flex; gap: 8px; }
.pick { padding-top: 3px; }
.fields { display: flex; gap: 7px; }
.sq { position: relative; width: 114px; height: 114px; border: 2px solid #1c1c1c; background: linear-gradient(to top, #e4281a, rgba(240, 140, 20, .6) 50%, rgba(255, 255, 0, 0)), linear-gradient(90deg, #ff0, #fffbe0); overflow: hidden; }
.sq::before { content: ""; position: absolute; inset: 0; background: linear-gradient(90deg, transparent, rgba(240, 60, 225, .9)); mask-image: linear-gradient(transparent, #000); }
.ring { position: absolute; left: -6px; top: 16px; width: 12px; height: 12px; border: 1px solid #333; border-radius: 50%; }
.hue { position: relative; width: 12px; height: 114px; border: 2px solid #1c1c1c; border-width: 2px 1px; background: linear-gradient(#f8c90c, #8ebc16 45%, #1ec01e); }
.hue::before, .hue::after { content: ""; position: absolute; top: -3px; border: 4px solid transparent; }
.hue::before { left: -6px; border-left: 5px solid #161616; border-right: 0; }
.hue::after { right: -6px; border-right: 5px solid #161616; border-left: 0; }
.hexrow { display: flex; justify-content: flex-end; gap: 5px; width: 114px; margin-top: 3px; line-height: 15px; font-size: 11px; }
.hex { width: 46px; height: 15px; padding-left: 3px; border: 1px solid #1c1c1c; background: #8c8c8c; color: #1c1c1c; font: 11px/13px "Noto Sans", sans-serif; }
.chan > div { display: flex; align-items: center; height: 18px; font-size: 11px; }
.chan label { display: flex; align-items: center; gap: 4px; width: 38px; }
.chan .alpha { padding-left: 16px; }
.chan .gap { margin-top: 9px; }
.chan span { margin-left: 2px; }
.chan input[type="radio"] { appearance: none; width: 12px; height: 12px; border: 1px solid #2a2a2a; border-radius: 50%; background: #484848; }
.chan input[type="radio"]:checked { background: radial-gradient(#bbb 1px, #484848 3px); }
.preview { width: 199px; height: 40px; margin: 6px 0 12px 2px; border: 2px solid #1c1c1c; background: #f8c90c; }
.add { width: 140px; height: 24px; margin-left: 3px; }

/* align panel */
.align { height: 216px; padding: 8px 16px 0 15px; }
.align h3 { line-height: 17px; height: 18px; padding-left: 1px; }
.arow { display: flex; gap: 11px; height: 28px; padding: 6px 0 0 5px; }
.arow svg { width: 16px; height: 16px; }
.arow i { width: 7px; }
.two { display: grid; grid-template-columns: 100px 1fr; }
.align .check { margin-top: 6px; padding: 8px 0 0 5px; border-top: 1px solid #2c2c2c; }

/* scenes */
.scenes { height: 116px; border: 1px solid #191919; display: flex; flex-direction: column; background: #414141; }
.scene { display: flex; align-items: center; gap: 6px; height: 18px; padding-left: 3px; background: #4f4f4f; }
.foot { display: flex; align-items: center; gap: 7px; height: 13px; margin-top: auto; padding-left: 2px; }
.hbar { position: relative; flex: 1; height: 12px; border: 1px solid #262626; background: #383838; }
.hbar b { position: absolute; top: 0; bottom: 0; background: #484848; border: solid #1e1e1e; border-width: 0 1px; }
.hbar::before, .hbar::after { content: ""; position: absolute; top: 1px; border: 4px solid transparent; }
.hbar::before { left: 4px; border-right: 5px solid #bbb; border-left: 0; }
.hbar::after { right: 4px; border-left: 5px solid #bbb; border-right: 0; }
.hbar.off::before, .hbar.off::after { opacity: .3; }

/* motion presets */
.presets { flex: 1; display: flex; flex-direction: column; }
.pview { height: 115px; display: grid; place-items: center; }
.search { display: flex; align-items: center; gap: 4px; height: 27px; padding: 2px 5px 0 7px; font-size: 11px; border-top: 1px solid #4c4c4c; }
.search span { width: 75px; }
.search input { flex: 1; min-width: 0; height: 17px; border: 1px solid #111; background: #999; }
.tree { flex: 1; margin: 0 5px 0 4px; padding-top: 1px; border: 1px solid #161616; background: #414141; }
.tree li { display: flex; align-items: center; gap: 4px; height: 19px; padding-left: 5px; }
.tree .tri { margin-right: 7px; }
.tree .tri.rt { margin-right: 9px; }
.tree .f { width: 15px; height: 11px; }
.tree .in { padding-left: 42px; gap: 6px; }
.apply { display: flex; align-items: center; gap: 16px; height: 30px; padding: 0 17px 0 9px; }
.apply .btn { width: 77px; margin-left: auto; }

/* timeline */
.timeline { display: grid; grid-template-columns: 225px minmax(0, 1fr) 12px; height: 166px; background: #383838; }
.layers { border-right: 1px solid #777; }
.lhead { display: flex; align-items: center; height: 34px; padding: 8px 7px 0 14px; gap: 5px; background: #444; }
.ly { width: 16px; height: 12px; margin-right: 3px; }
.outline { width: 5px; height: 11px; margin-left: 3px; border: 1px solid #111; }
.outline.cyan { margin-left: 8px; background: #2ee8dc; border: 0; }
.lrow { display: flex; align-items: center; height: 18px; padding: 0 7px 0 25px; gap: 5px; background: #97751c; color: #fff; }
.lrow svg { fill: #e4c896; }
.lrow .tri.lt { border-right-color: #e8d4b0; }
.lrow .tri.rt { border-left-color: #e8d4b0; }
.key { width: 6px; height: 12px; background: radial-gradient(circle at 3px 9px, #222 2px, #e8d4b0 3px); }
.dot { width: 4px; height: 4px; margin-left: 6px; border-radius: 50%; background: #ffe; }
.lrow .dot + .dot { margin-left: 10px; }
.frames { position: relative; overflow: hidden; font: 11px/14px "Noto Sans", sans-serif; }
.ruler { height: 34px; padding-left: 1px; background: repeating-linear-gradient(90deg, transparent 0 7px, #777 7px 8px) 1px 100% / 100% 3px no-repeat, #444; }
.secs { display: flex; height: 17px; padding-left: 184px; line-height: 16px; }
.secs span { flex: none; width: 192px; }
.nums { display: flex; position: relative; z-index: 1; }
.nums span { flex: none; width: 40px; line-height: 15px; }
.nums span:first-child { width: 31px; padding-left: 1px; margin-right: 1px; }
.cells { height: 19px; width: 713px; max-width: 100%; padding-left: 1px; border-bottom: 1px solid #4c4c4c; background: repeating-linear-gradient(90deg, transparent 0 7px, #525252 7px 8px) 1px 0, repeating-linear-gradient(90deg, #484848 0 32px, #414141 32px 40px) 1px 0; }
.frame { display: block; width: 8px; height: 18px; background: radial-gradient(circle at 4px 12px, #701515 2px, #b07030 3px); border-right: 1px solid #111; }
.playhead { position: absolute; left: 0; top: 2px; bottom: 0; width: 9px; background: linear-gradient(#7a2323, #7a2323) 0 0 / 9px 32px no-repeat, linear-gradient(#7c2326, #7c2326) 4px 0 / 2px 100% no-repeat; }
.vbar { position: relative; width: 12px; border: 1px solid #262626; background: #383838; }
.vbar b { position: absolute; left: 0; right: 0; background: #474747; border: solid #1e1e1e; border-width: 1px 0; }
.vbar::before, .vbar::after { content: ""; position: absolute; left: 1px; border: 4px solid transparent; }
.vbar::before { top: 4px; border-bottom: 5px solid #bbb; border-top: 0; }
.vbar::after { bottom: 4px; border-top: 5px solid #bbb; border-bottom: 0; }
.dimmed { margin-top: 34px; }
.dimmed::before, .dimmed::after { opacity: .4; }
.tfoot { display: flex; height: 22px; border-top: 1px solid #606060; }
.tl { flex: none; display: flex; align-items: center; gap: 9px; width: 226px; padding: 0 4px 0 9px; border-right: 1px solid #777; }
.tr { flex: 1; min-width: 0; display: flex; align-items: center; padding-left: 4px; }
.grp { display: flex; padding-right: 5px; margin-right: 5px; border-right: 1px solid #2c2c2c; }
.grp button { width: 18px; height: 16px; }
.grp.wide { gap: 3px; }
.grp svg { width: 12px; height: 11px; }
.grp.wide svg { width: 13px; }
.cur { margin: 0 25px 0 3px; }
.fps { width: 50px; flex: none; font-size: 9px; line-height: 12px; color: #626262; white-space: nowrap; }
.lime { color: #a8a020; margin-right: 3px; }
.tr > span:not(.fps) { font-size: 11px; }
.tscroll { flex: 0 1 186px; margin: 0 10px 0 12px; background: #3c3c3c; border-color: #1c1c1c; }
.tscroll b { left: 14px; width: 24px; }
.undo { margin-right: 9px; }
input[type="range"] { appearance: none; width: 90px; height: 12px; margin: 0 9px 0 11px; background: linear-gradient(#1c1c1c, #1c1c1c) 0 50% / 100% 4px no-repeat; }
input[type="range"]::-webkit-slider-thumb { appearance: none; width: 8px; height: 10px; border: 1px solid #1c1c1c; border-radius: 4px 4px 1px 1px; background: #555; }

/* tools */
.tools { height: 65px; padding: 6px 0 0 3px; }
.trow { display: flex; height: 31px; }
.tool { position: relative; flex: none; width: 30px; height: 24px; margin: 0 2px; }
.tool svg { width: 18px; height: 18px; }
.tool.sel { background: #303030; border: 1px solid #151515; }
.tool.more::after { content: ""; position: absolute; right: 1px; bottom: 1px; border: 2px solid #bbb; border-left-color: transparent; border-top-color: transparent; }
.tool.dim { opacity: .3; }
.tool.serif, .bigt { font: 20px/24px "Liberation Serif", serif; color: #ccc; }
.trow i { width: 2px; height: 26px; margin: 0 1px; border-left: 1px solid #2c2c2c; }
.paints { display: flex; align-items: center; height: 24px; padding: 0 9px 0 15px; }
.paints .chip { margin-left: 7px; }
.paints .chip + .gold { margin: 0 5px 0 3px; }
.paints .i12 { margin: 0 2px; }

/* document */
.tabs.doc { height: 21px; }
.doc .tab { height: 21px; padding: 0 9px 0 10px; font-size: 11px; }
.close { margin-left: 8px; font-size: 12px; }
.docbar { display: flex; align-items: center; height: 27px; padding: 0 9px 0 6px; border-bottom: 1px solid #222; }
.docbar > .clap { margin: 0 11px 0 15px; }
.docr { margin-left: auto; display: flex; align-items: center; gap: 2px; }
.docr .tri { margin: 12px 5px 0 0; }
.docr .i14 { margin-right: 8px; }
.docr .select { width: 78px; height: 17px; margin-left: 3px; }
.docr .select select { font: 11px/15px "Noto Sans", sans-serif; }
.stage { flex: 1; display: grid; grid-template-columns: minmax(0, 1fr) 12px; grid-template-rows: minmax(420px, 1fr) 12px; }
.view { display: grid; place-items: center; padding: 13px 0 0 11px; background: #424242; overflow: hidden; }
.canvas { position: relative; width: 551px; height: 401px; border: 1px solid #161616; background: #fdfdfd; }
.textbox { position: absolute; left: 89px; top: 78px; width: 166px; height: 62px; border: 1px solid #3c7ec0; display: flex; align-items: center; justify-content: center; color: #fbcd08; font: 900 40px/56px "Source Han Serif SC", "Noto Serif CJK SC", "Noto Sans CJK SC", serif; }
.textbox b { position: absolute; width: 5px; height: 5px; background: #1b62c4; top: -3px; left: -3px; }
.textbox b:nth-of-type(2n) { left: auto; right: -3px; }
.textbox b:nth-of-type(n+3) { top: auto; bottom: -3px; }
.stage .vbar b { top: 33%; bottom: 34%; }
.stage .hbar b { left: 27%; right: 27%; }

/* properties */
.ptype { display: flex; align-items: center; height: 63px; padding: 18px 22px 0 31px; gap: 10px; border-top: 1px solid #505050; }
.bigt { width: 35px; margin: -18px 0 0 0; }
.ptype .select { flex: 1; height: 17px; }
.ptype .select select { padding-left: 6px; }
.sort { width: 35px; height: 17px; gap: 3px; }
.sort svg { height: 12px; }
.props { display: flex; }
.props .vbar b { top: 14px; height: 194px; }
.plist { flex: 1; min-width: 0; }
.plist h2 { display: flex; align-items: center; gap: 7px; height: 20px; margin-bottom: 2px; padding-left: 6px; border: solid #191919; border-width: 1px 0; background: linear-gradient(#515151, #454545); line-height: 18px; }
.plist h2:last-child { margin-bottom: 1px; }
.plist h2 .tri { margin-right: 1px; }
.plist h2 .rt { margin-right: 3px; }
.xy { display: grid; grid-template-columns: 68px 38px 61px 1fr; column-gap: 8px; align-items: center; height: 33px; justify-items: start; margin-top: -2px; }
.xy label { justify-self: end; }
.wh { position: relative; height: 34px; margin-top: 0; border-top: 1px solid #303030; }
.wh svg { position: absolute; left: 5px; top: 10px; }
.chars { padding: 5px 20px 0 0; }
.prow { display: flex; align-items: center; height: 24px; }
.prow > label:first-child { flex: none; width: 67px; margin-right: 9px; text-align: right; white-space: nowrap; }
.prow .select { flex: 1; }
.globe { margin: 0 1px 0 6px; }
.prow .embed { width: 73px; margin-left: 3px; }
.size { position: relative; display: flex; align-items: center; gap: 3px; }
.size input { width: 24px; height: 19px; padding-left: 2px; background: #c4900e; color: #7c5a0a; font: 11px/19px "Noto Sans", sans-serif; }
.cursor { position: absolute; left: 14px; top: 5px; width: 18px; height: 10px; }
.kern { margin: 0 6px 0 auto; }
.kern + .hot { margin-right: 14px; }
.chip.wide { width: 31px; height: 16px; margin-right: 7px; }
.tbtns { display: flex; align-items: center; gap: 3px; height: 33px; padding: 0 19px 4px 77px; border-top: 1px solid #303030; }
.tb { width: 18px; height: 18px; border: 1px solid #222; font: 15px/16px "Liberation Serif", serif; }
.tb sup, .tb sub { font-size: 8px; line-height: 8px; }
.tb sup { align-self: flex-start; }
.tb sub { align-self: flex-end; }
.tb.sel { background: #bbb; color: #222; font-weight: 700; }

/* library */
.library { flex: 1; display: flex; flex-direction: column; }
.lsel { display: flex; align-items: center; height: 28px; padding: 4px 8px 4px 6px; border-bottom: 1px solid #333; }
.lsel .select { flex: 1; height: 17px; }
.lsel .i14 { margin-left: 13px; }
.lsel .select + .i14 { margin-left: 10px; }
.lview { height: 138px; border-bottom: 1px solid #505050; }
.lfind { display: flex; align-items: center; height: 24px; padding: 0 4px 0 5px; font-size: 11px; }
.lfind span { width: 161px; }
.lfind div { flex: 1; display: flex; align-items: center; height: 18px; padding-left: 2px; border: 1px solid #151515; background: #999; }
.lfind svg { color: #444; }
.lfind input { flex: 1; min-width: 0; height: 16px; }
.ltable { width: 100%; table-layout: fixed; border-collapse: collapse; border: 1px solid #151515; }
.ltable th { height: 18px; padding: 0 5px; border-right: 1px solid #333; background: linear-gradient(#525252, #404040); font-weight: 400; text-align: left; line-height: 16px; white-space: nowrap; }
.ltable .tri { float: right; margin-top: 5px; margin-right: -1px; }
.c71 { width: 71px; } .c129 { width: 129px; } .c17 { width: 17px; }
.lempty { flex: 1; background: #414141; border: solid #191919; border-width: 0 1px; }
.foot.lib { gap: 6px; }

/* overlays */
.meter { position: absolute; right: 1px; top: 738px; width: 9px; height: 59px; border: 1px solid #aaa; border-radius: 4px; background: linear-gradient(#161616 32px, transparent 0), repeating-linear-gradient(#5cc878 0 1px, #1e5a2c 1px 3px); }
.subtitle { position: absolute; left: 0; right: 0; top: 902px; text-align: center; font: 500 63px/92px "Noto Sans CJK SC", sans-serif; color: #fff; -webkit-text-stroke: 4px #1c1c1c; paint-order: stroke fill; pointer-events: none; }
.watermark { position: absolute; left: 11px; top: 1031px; display: flex; align-items: center; gap: 10px; height: 38px; opacity: .45; color: #ddd; font: 600 38px/38px "Open Sans", sans-serif; pointer-events: none; }
.watermark svg { width: 38px; height: 38px; fill: #ddd; }
```
